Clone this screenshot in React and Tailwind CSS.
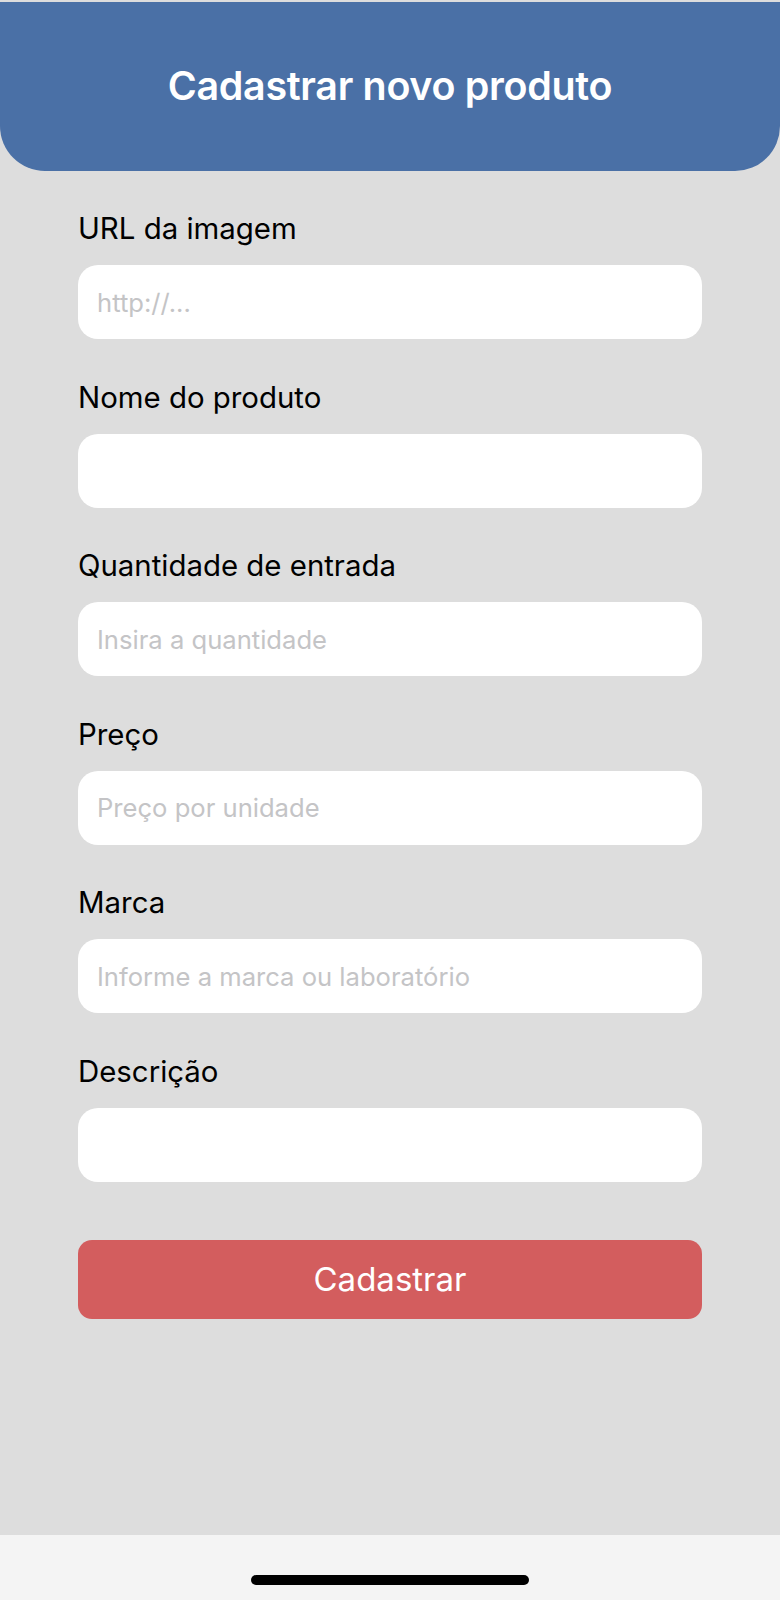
import React from "react";

const fields = [
  { label: "URL da imagem", placeholder: "http://..." },
  { label: "Nome do produto", placeholder: "" },
  { label: "Quantidade de entrada", placeholder: "Insira a quantidade" },
  { label: "Preço", placeholder: "Preço por unidade" },
  { label: "Marca", placeholder: "Informe a marca ou laboratório" },
  { label: "Descrição", placeholder: "" },
];

function Field({ label, placeholder }) {
  return (
    <div className="flex flex-col">
      <label className="text-[29.4px] leading-[32px] text-black mb-[20px]">{label}</label>
      <input
        type="text"
        placeholder={placeholder}
        className="h-[74px] w-full rounded-[20px] bg-white px-[19px] text-[25.6px] text-black outline-none placeholder:text-[#c4c4c6]"
      />
    </div>
  );
}

export default function App() {
  return (
    <div
      className="w-[780px] h-[1600px] flex flex-col bg-[#dddddd]"
      style={{ fontFamily: "Inter, 'Noto Sans', sans-serif" }}
    >
      <div className="flex-1 flex flex-col pt-[2px] bg-[#dddddd]">
        <header className="h-[169px] bg-[#4a70a6] rounded-b-[45px] flex items-center justify-center">
          <h1 className="text-[39.4px] font-semibold text-white tracking-[-0.3px]">Cadastrar novo produto</h1>
        </header>

        <form className="flex flex-col px-[78px] pt-[42px] gap-[42.5px]">
          {fields.map((f) => (
            <Field key={f.label} {...f} />
          ))}
          <button
            type="button"
            className="mt-[16px] h-[79px] w-full rounded-[14px] bg-[#d35d5e] text-white text-[33px]"
          >
            Cadastrar
          </button>
        </form>
      </div>

      <div className="h-[65px] bg-[#f4f4f4] flex justify-center pt-[40px]">
        <div className="w-[278px] h-[10px] rounded-full bg-black" />
      </div>
    </div>
  );
}
